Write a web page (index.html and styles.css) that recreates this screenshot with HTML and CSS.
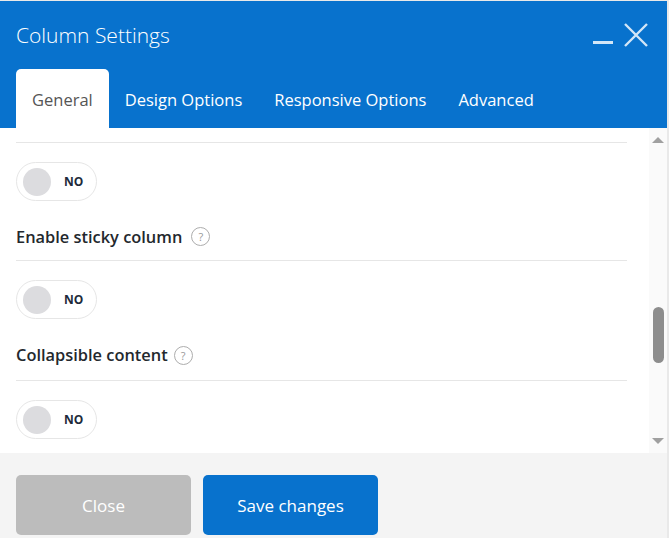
FILE: index.html
```html
<!DOCTYPE html>
<html lang="en">
<head>
    <meta charset="UTF-8">
    <meta name="viewport" content="width=device-width, initial-scale=1.0">
    <title>Column Settings</title>
    <link rel="stylesheet" href="styles.css">
</head>
<body>
    <div class="modal">
        <header class="modal-head">
            <div class="modal-top">
                <h2 class="modal-title">Column Settings</h2>
                <div class="modal-controls">
                    <button type="button" class="ctl ctl-min" aria-label="Minimize">
                        <svg width="22" height="22" viewBox="0 0 22 22"><line x1="1" y1="18.5" x2="21" y2="18.5" stroke="currentColor" stroke-width="3"/></svg>
                    </button>
                    <button type="button" class="ctl ctl-close" aria-label="Close">
                        <svg width="26" height="26" viewBox="0 0 26 26"><path d="M2 2 L24 24 M24 2 L2 24" stroke="currentColor" stroke-width="2.4" fill="none"/></svg>
                    </button>
                </div>
            </div>
            <nav class="tabs">
                <a class="tab active">General</a>
                <a class="tab">Design Options</a>
                <a class="tab">Responsive Options</a>
                <a class="tab">Advanced</a>
            </nav>
        </header>

        <div class="modal-body">
            <div class="body-scroll">
                <div class="body-inner">
                    <div class="field">
                        <div class="field-label"></div>
                        <label class="toggle"><span class="knob"></span><span class="toggle-text">NO</span></label>
                    </div>
                    <div class="field">
                        <div class="field-label">Enable sticky column <span class="help">?</span></div>
                        <label class="toggle"><span class="knob"></span><span class="toggle-text">NO</span></label>
                    </div>
                    <div class="field field-tall">
                        <div class="field-label">Collapsible content <span class="help help-near">?</span></div>
                        <label class="toggle"><span class="knob"></span><span class="toggle-text">NO</span></label>
                    </div>
                </div>
            </div>
            <div class="scrollbar">
                <span class="arrow arrow-up"></span>
                <div class="track"><span class="thumb"></span></div>
                <span class="arrow arrow-down"></span>
            </div>
        </div>

        <footer class="modal-foot">
            <button type="button" class="btn btn-close">Close</button>
            <button type="button" class="btn btn-save">Save changes</button>
        </footer>
    </div>
</body>
</html>
```

FILE: styles.css
```css
html {
    background-color: #e9e9e9;
}

body {
    margin: 0;
    padding: 1px 0 0 0;
    font-family: 'Open Sans', 'Noto Sans', sans-serif;
    overflow: hidden;
    height: 537px;
}

.modal {
    width: 667px;
    height: 537px;
    display: flex;
    flex-direction: column;
    background-color: #fff;
}

/* header */

.modal-head {
    background-color: #0872cd;
    color: #fff;
    height: 127px;
    display: flex;
    flex-direction: column;
}

.modal-top {
    height: 68px;
    display: flex;
    align-items: center;
    justify-content: space-between;
    padding: 0 18px 0 16px;
}

.modal-title {
    margin: 0;
    font-size: 21px;
    font-weight: 300;
}

.modal-controls {
    display: flex;
    align-items: center;
    gap: 9px;
}

.ctl {
    all: unset;
    color: #d3e6f7;
    display: flex;
}

.tabs {
    display: flex;
    padding-left: 16px;
    height: 59px;
}

.tab {
    padding: 2px 16px 0;
    display: flex;
    align-items: center;
    font-size: 16.5px;
    color: #fff;
}

.tab.active {
    background-color: #fff;
    color: #555;
    border-radius: 5px 5px 0 0;
}

/* body */

.modal-body {
    flex: 1;
    display: flex;
    min-height: 0;
}

.body-scroll {
    flex: 1;
    overflow: hidden;
    padding: 0 22px 0 16px;
}

.body-inner {
    margin-top: -22px;
}

.field {
    padding-bottom: 23px;
}

.field-label {
    display: flex;
    align-items: center;
    font-size: 16.4px;
    font-weight: 600;
    color: #23282d;
    height: 24px;
    padding-bottom: 12px;
    border-bottom: 1px solid #e6e6e6;
    margin-bottom: 19px;
}

.field-tall .field-label {
    padding-bottom: 14px;
}

.help {
    width: 17px;
    height: 17px;
    border: 1px solid #adadad;
    border-radius: 50%;
    margin-left: 9px;
    font-size: 11px;
    font-weight: 400;
    color: #999;
    display: flex;
    align-items: center;
    justify-content: center;
}

.help-near {
    margin-left: 6px;
    margin-top: 3px;
}

.toggle {
    height: 37px;
    border: 1px solid #e6e6e6;
    border-radius: 20px;
    display: flex;
    align-items: center;
    padding-left: 6px;
    width: 73px;
}

.knob {
    width: 28px;
    height: 28px;
    border-radius: 50%;
    background-color: #dcdcdf;
}

.toggle-text {
    margin-left: 13px;
    font-size: 12px;
    font-weight: 700;
    color: #1d2a3a;
}

/* fake scrollbar */

.scrollbar {
    width: 18px;
    background-color: #fafafa;
    display: flex;
    flex-direction: column;
    align-items: center;
}

.arrow {
    width: 0;
    height: 0;
    border-left: 6px solid transparent;
    border-right: 6px solid transparent;
}

.arrow-up {
    border-bottom: 6px solid #a0a0a0;
    margin-top: 9px;
}

.arrow-down {
    border-top: 6px solid #a0a0a0;
    margin-bottom: 9px;
}

.track {
    flex: 1;
    width: 100%;
    display: flex;
    justify-content: center;
}

.thumb {
    width: 11px;
    height: 56px;
    border-radius: 6px;
    background-color: #8d8d8d;
    margin-top: 164px;
}

/* footer */

.modal-foot {
    height: 85px;
    background-color: #f4f4f4;
    display: flex;
    gap: 12px;
    padding: 22px 16px 0;
    box-sizing: border-box;
}

.btn {
    width: 175px;
    height: 60px;
    border: none;
    border-radius: 5px;
    font-family: inherit;
    font-size: 17px;
    color: #fff;
}

.btn-close {
    background-color: #bcbcbc;
}

.btn-save {
    background-color: #0872cd;
}
```
